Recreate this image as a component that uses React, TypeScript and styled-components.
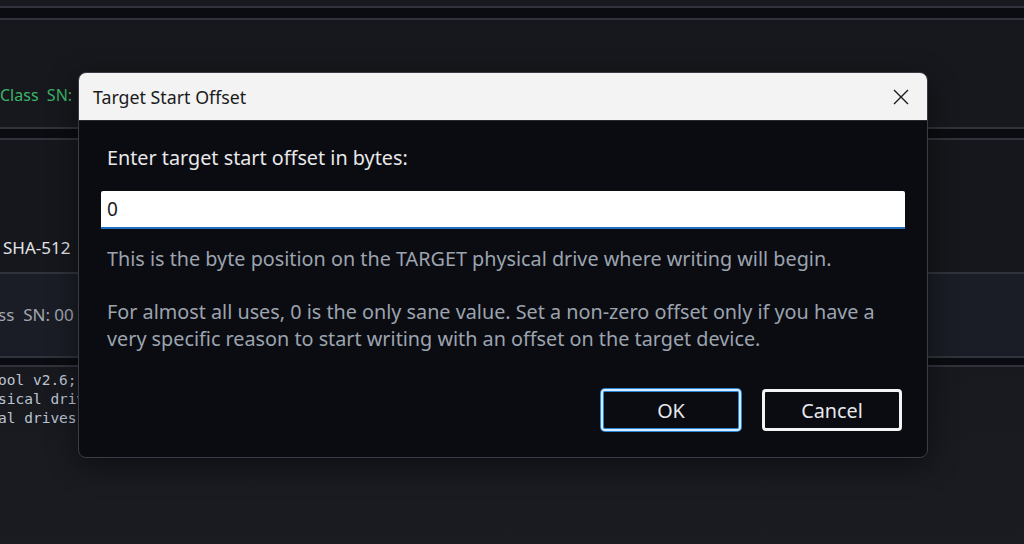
import React from "react";
import styled, { createGlobalStyle } from "styled-components";

const Global = createGlobalStyle`
  html, body {
    margin: 0;
    padding: 0;
    background: #15171c;
    overflow: hidden;
  }
  * { box-sizing: border-box; }
`;

const uiFont = `"Noto Sans", "Open Sans", sans-serif`;
const monoFont = `"DejaVu Sans Mono", "Liberation Mono", monospace`;

function App(): React.ReactElement {
  return (
    <Page>
      <Global />
      <TopPanel />
      <Rule />
      <Band />
      <Rule />
      <Panel $height={107} $bg="#16181d">
        <PanelText $top={64} $color="#3cb36a">Class&nbsp; SN:</PanelText>
      </Panel>
      <Rule />
      <Band $height={9} />
      <Rule />
      <Panel $height={132} $bg="#15171c">
        <PanelText $top={97} $color="#e2e4e8" $indent={3} $size={17}>
          SHA-512
        </PanelText>
      </Panel>
      <Rule />
      <Panel $height={82} $bg="#1a1d25">
        <PanelText $top={30} $color="#a3a7b0" $indent={-2} $size={17}>
          ss&nbsp; SN: 00
        </PanelText>
      </Panel>
      <Rule />
      <Band $height={7} />
      <Rule />
      <Log>
        <LogLine>ool v2.6; physical drive imaging ready</LogLine>
        <LogLine>sical drives enumerated</LogLine>
        <LogLine>al drives found</LogLine>
      </Log>

      <Dialog>
        <TitleBar>
          <Title>Target Start Offset</Title>
          <CloseButton aria-label="Close">
            <svg width="18" height="18" viewBox="0 0 18 18">
              <path
                d="M2 2 L16 16 M16 2 L2 16"
                stroke="#1b1b1b"
                strokeWidth="1.4"
                fill="none"
              />
            </svg>
          </CloseButton>
        </TitleBar>
        <Body>
          <Label>Enter target start offset in bytes:</Label>
          <Input defaultValue="0" />
          <Help>
            This is the byte position on the TARGET physical drive where
            writing will begin.
          </Help>
          <Help $gap={26}>
            For almost all uses, 0 is the only sane value. Set a non-zero
            offset only if you have a very specific reason to start writing
            with an offset on the target device.
          </Help>
          <Buttons>
            <DialogButton $variant="default">OK</DialogButton>
            <DialogButton $variant="focus">Cancel</DialogButton>
          </Buttons>
        </Body>
      </Dialog>
    </Page>
  );
}

export default App;

const Page = styled.div`
  position: relative;
  width: 1024px;
  height: 544px;
  overflow: hidden;
  background: linear-gradient(90deg, #15171c 0%, #1a1c22 70%, #1c1e24 100%);
  display: flex;
  flex-direction: column;
`;

const TopPanel = styled.div`
  height: 6px;
  background: #17191e;
`;

const Rule = styled.div`
  height: 2px;
  background: #30333b;
  flex-shrink: 0;
`;

const Band = styled.div<{ $height?: number }>`
  height: ${(p) => p.$height ?? 10}px;
  background: #0a0c11;
  flex-shrink: 0;
`;

const Panel = styled.div<{ $height: number; $bg: string }>`
  height: ${(p) => p.$height}px;
  background: ${(p) => p.$bg};
  flex-shrink: 0;
  padding-top: 1px;
`;

const PanelText = styled.div<{
  $top: number;
  $color: string;
  $indent?: number;
  $size?: number;
}>`
  margin-top: ${(p) => p.$top}px;
  margin-left: ${(p) => p.$indent ?? 0}px;
  font-family: ${uiFont};
  font-size: ${(p) => p.$size ?? 16}px;
  line-height: 20px;
  color: ${(p) => p.$color};
  white-space: nowrap;
`;

const Log = styled.div`
  flex: 1;
  padding-top: 4px;
  background: linear-gradient(180deg, #17191f 0%, #1a1c22 100%);
`;

const LogLine = styled.div`
  font-family: ${monoFont};
  font-size: 14.5px;
  line-height: 19px;
  color: #bcc4d2;
  white-space: nowrap;
  margin-left: -2px;
`;

const Dialog = styled.div`
  position: absolute;
  left: 78px;
  top: 72px;
  width: 850px;
  height: 386px;
  border: 1px solid #3a3d45;
  border-radius: 8px;
  background: #0b0c11;
  box-shadow: 0 8px 30px rgba(0, 0, 0, 0.45);
  overflow: hidden;
  display: flex;
  flex-direction: column;
`;

const TitleBar = styled.div`
  height: 48px;
  background: #f3f3f3;
  border-bottom: 1px solid #2a2c31;
  display: flex;
  align-items: center;
  justify-content: space-between;
  padding: 0 14px 0 14px;
  flex-shrink: 0;
`;

const Title = styled.div`
  font-family: ${uiFont};
  font-size: 17.8px;
  color: #1b1b1b;
  margin-top: 1px;
`;

const CloseButton = styled.div`
  width: 20px;
  height: 20px;
  display: flex;
  align-items: center;
  justify-content: center;
  margin-right: 2px;
`;

const Body = styled.div`
  flex: 1;
  padding: 24px 22px 0 22px;
  display: flex;
  flex-direction: column;
  font-family: ${uiFont};
`;

const Label = styled.div`
  padding-left: 6px;
  font-size: 19.8px;
  line-height: 26px;
  color: #e8e8ea;
`;

const Input = styled.input`
  margin-top: 20px;
  height: 38px;
  width: 100%;
  border: none;
  border-bottom: 2px solid #1f6fc4;
  border-radius: 2px 2px 0 0;
  background: #ffffff;
  padding: 0 6px;
  font-family: ${uiFont};
  font-size: 19px;
  color: #1b1b1b;
  outline: none;
`;

const Help = styled.p<{ $gap?: number }>`
  margin: ${(p) => p.$gap ?? 16}px 0 0 0;
  padding-left: 6px;
  font-size: 19.8px;
  line-height: 27px;
  color: #9ca4b0;
`;

const Buttons = styled.div`
  margin-top: 37px;
  display: flex;
  justify-content: flex-end;
  gap: 21px;
  padding-right: 3px;
`;

const DialogButton = styled.div<{ $variant: "default" | "focus" }>`
  width: 140px;
  height: 42px;
  display: flex;
  align-items: center;
  justify-content: center;
  border-radius: 4px;
  background: #0b0c11;
  font-size: 19.8px;
  color: #e6e8ec;
  border: ${(p) =>
    p.$variant === "focus" ? "3px solid #f4f4f4" : "2px solid #d6ebff"};
  box-shadow: ${(p) =>
    p.$variant === "default"
      ? "0 0 0 1px #2a86d8, inset 0 0 0 1px #2a86d8"
      : "none"};
`;
